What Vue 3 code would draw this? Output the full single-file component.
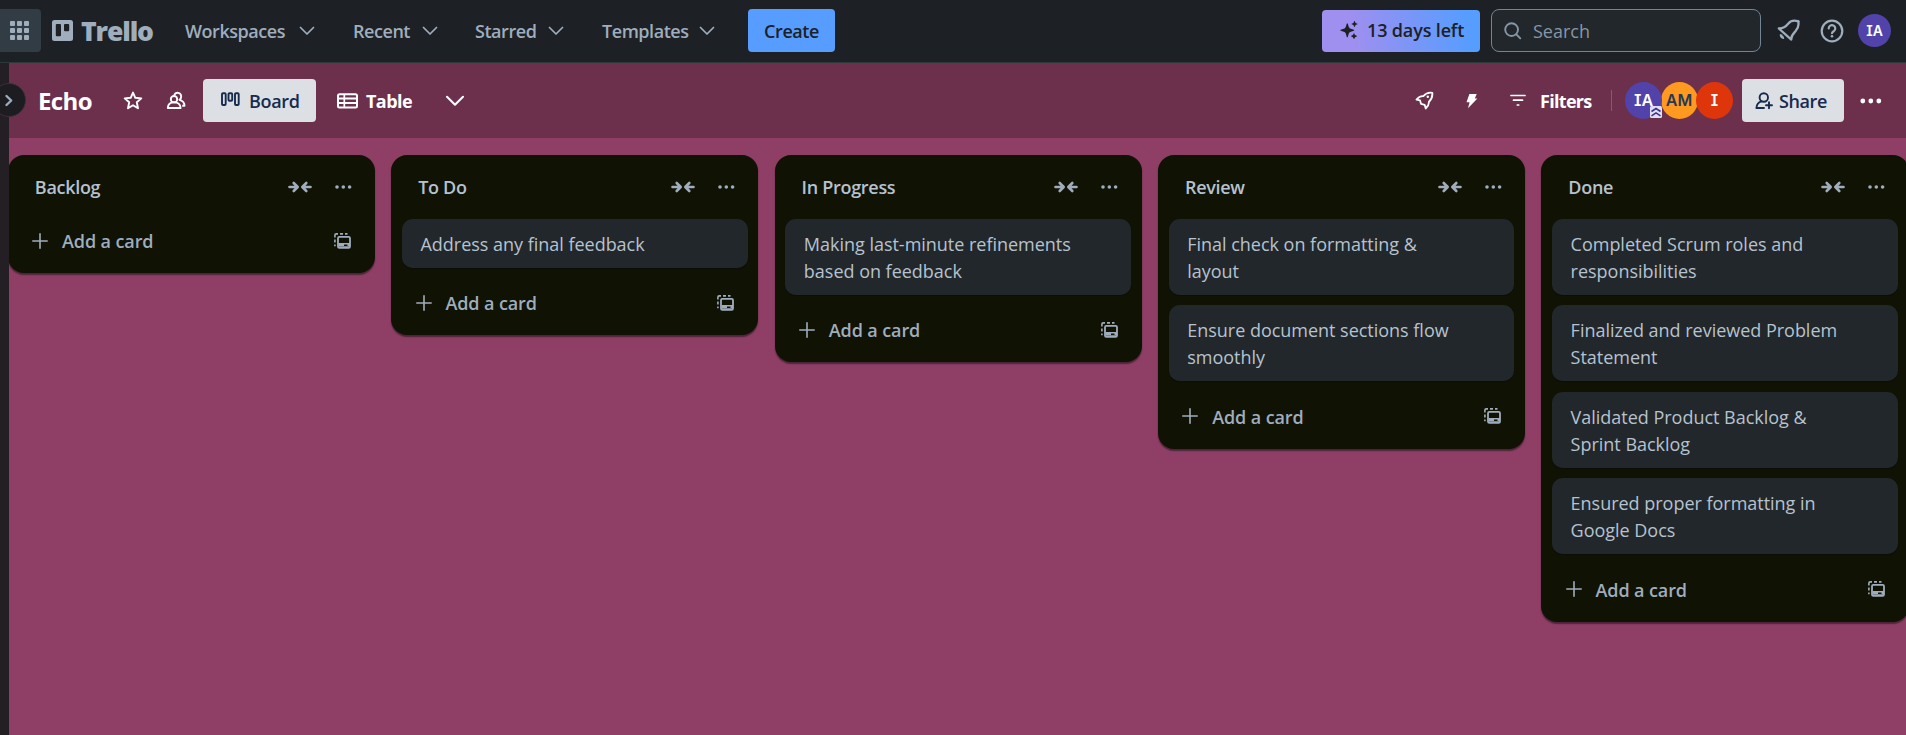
<script setup>
const navItems = [
  { label: 'Workspaces', cls: 'workspaces' },
  { label: 'Recent', cls: 'recent' },
  { label: 'Starred', cls: 'starred' },
  { label: 'Templates', cls: 'templates' },
]

const lists = [
  { title: 'Backlog', cards: [] },
  { title: 'To Do', cards: [['Address any final feedback']] },
  { title: 'In Progress', cards: [['Making last-minute refinements', 'based on feedback']] },
  {
    title: 'Review',
    cards: [
      ['Final check on formatting &', 'layout'],
      ['Ensure document sections flow', 'smoothly'],
    ],
  },
  {
    title: 'Done',
    cards: [
      ['Completed Scrum roles and', 'responsibilities'],
      ['Finalized and reviewed Problem', 'Statement'],
      ['Validated Product Backlog &', 'Sprint Backlog'],
      ['Ensured proper formatting in', 'Google Docs'],
    ],
  },
]
</script>

<template>
  <div class="app">
    <header class="topbar">
      <button class="apps" aria-label="Apps">
        <svg width="19" height="19" viewBox="0 0 19 19" fill="currentColor">
          <template v-for="r in 3" :key="r">
            <rect v-for="c in 3" :key="c" :x="(c - 1) * 7" :y="(r - 1) * 7" width="5" height="5" rx="1" />
          </template>
        </svg>
      </button>
      <a class="logo">
        <svg width="21" height="21" viewBox="0 0 21 21">
          <path fill="currentColor" fill-rule="evenodd" d="M2.5 0h16A2.5 2.5 0 0 1 21 2.5v16a2.500 2.500 0 0 1-2.500 2.500h-16A2.500 2.500 0 0 1 0 18.500v-16A2.500 2.500 0 0 1 2.500 0zM4.800 4a1 1 0 0 0-1 1v10.200a1 1 0 0 0 1 1H8a1 1 0 0 0 1-1V5a1 1 0 0 0-1-1zM13 4a1 1 0 0 0-1 1v5.300a1 1 0 0 0 1 1h3.200a1 1 0 0 0 1-1V5a1 1 0 0 0-1-1z" />
        </svg>
        <span class="wordmark">Trello</span>
      </a>
      <nav class="nav">
        <a v-for="n in navItems" :key="n.label" class="nav-item" :class="n.cls">
          <span>{{ n.label }}</span>
          <svg width="16" height="10" viewBox="0 0 16 10" fill="none" stroke="currentColor" stroke-width="1.700" stroke-linecap="round" stroke-linejoin="round">
            <path d="M1.500 1.500 8 8l6.500-6.500" />
          </svg>
        </a>
      </nav>
      <button class="create"><span>Create</span></button>
      <div class="spacer"></div>
      <button class="trial">
        <svg width="19" height="19" viewBox="0 0 19 19" fill="currentColor">
          <path d="M7.300 2.200c.8 0 .9 3.300 2.200 4.700 1.300 1.300 4.800 1.500 4.800 2.300s-3.500 1-4.800 2.300c-1.300 1.400-1.400 5-2.200 5s-.9-3.600-2.200-5C3.800 10.200.3 10 .3 9.200s3.500-1 4.800-2.300c1.300-1.400 1.400-4.700 2.200-4.700z" />
          <path d="M14.500 0c.6 0 .6 1.400 1.100 1.900.5.500 2 .5 2 1.100s-1.500.6-2 1.100c-.5.500-.5 2-1.100 2s-.6-1.500-1.100-2c-.5-.5-2-.5-2-1.100s1.500-.6 2-1.100c.5-.5.500-1.900 1.100-1.900zM14 12.200c.6 0 .6 1.400 1.100 1.900.5.500 1.800.5 1.800 1.100s-1.300.6-1.800 1.100c-.5.500-.5 1.800-1.100 1.800s-.6-1.300-1.100-1.800c-.5-.5-1.800-.5-1.800-1.100s1.300-.6 1.800-1.100c.5-.5.500-1.900 1.100-1.900z" />
        </svg>
        <span>13 days left</span>
      </button>
      <div class="search">
        <svg width="18" height="18" viewBox="0 0 18 18" fill="none" stroke="currentColor" stroke-width="1.900" stroke-linecap="round">
          <circle cx="7.600" cy="7.600" r="6.400" />
          <path d="m12.300 12.300 4 4" />
        </svg>
        <span>Search</span>
      </div>
      <svg class="bell" width="24" height="23" viewBox="0 0 24 23" fill="none" stroke="currentColor" stroke-width="2.300" stroke-linejoin="round">
        <path d="M1.800 9.500 14.300 20.600C13.800 17 15.500 15.600 18.300 12.500C21.200 9.200 22.200 6 21.200 2.300C17.200 1 13.800 1.600 11.400 4.500C8.700 7.800 6.500 9.800 1.800 9.500z" />
        <path d="M4.200 15.300c-.6 2.200 1.200 3.600 2.700 3.200" stroke-width="2.700" />
        <path d="M20.500 3.300 22 1.500" />
      </svg>
      <svg class="help" width="24" height="24" viewBox="0 0 24 24" fill="none" stroke="currentColor" stroke-width="2.200" stroke-linecap="round">
        <circle cx="12" cy="12" r="10.300" />
        <path d="M8.700 9.500a3.300 3.300 0 1 1 5.200 2.600c-1.200.8-1.900 1.200-1.900 2.100" />
        <circle cx="12" cy="17.300" r="1.300" fill="currentColor" stroke="none" />
      </svg>
      <span class="me">IA</span>
    </header>

    <div class="body">
      <aside class="rail">
        <button class="expand" aria-label="Expand sidebar">
          <svg width="10" height="13" viewBox="0 0 10 13" fill="none" stroke="currentColor" stroke-width="2.400" stroke-linecap="round" stroke-linejoin="round">
            <path d="m2.500 2 4.700 4.500L2.500 11" />
          </svg>
        </button>
      </aside>
      <main class="board">
        <div class="board-head">
          <h1 class="name">Echo</h1>
          <svg class="star" width="20" height="19" viewBox="0 0 20 19" fill="none" stroke="currentColor" stroke-width="1.900" stroke-linejoin="round">
            <path d="m10 1.600 2.300 5.200 6 .6-4.500 3.900 1.200 5.900-5-3-5 3 1.200-5.900-4.500-3.900 6-.6z" />
          </svg>
          <svg class="people" width="20" height="19" viewBox="0 0 20 19" fill="none" stroke="currentColor" stroke-width="1.900" stroke-linejoin="round">
            <circle cx="8" cy="8.200" r="3.200" />
            <path d="M1.800 17c0-3.600 2.600-5.700 6.200-5.700S14.600 13.400 14.600 17z" />
            <path d="M8.200 4C9.700.6 15 1.200 15.200 5.400c.1 1.500-.7 2.700-1.700 3.400 3.400.9 5 2.700 5 5.900h-2.300" />
          </svg>
          <button class="view active">
            <svg width="19" height="15" viewBox="0 0 19 15" fill="none" stroke="currentColor" stroke-width="1.900">
              <rect x="1" y="1.200" width="3.700" height="11.800" rx="1" />
              <rect x="7.500" y="1.200" width="3.700" height="7.600" rx="1" />
              <rect x="14" y="1.200" width="3.700" height="11.800" rx="1" />
            </svg>
            <span>Board</span>
          </button>
          <button class="view table">
            <svg width="21" height="16" viewBox="0 0 21 16" fill="none" stroke="currentColor" stroke-width="2">
              <rect x="1" y="1.300" width="19" height="13.200" rx="1.500" />
              <path d="M1 5.600h19M1 10.100h19" />
              <path d="M7.300 1v13.500" stroke-width="1.700" />
            </svg>
            <span>Table</span>
          </button>
          <svg class="more-views" width="20" height="12" viewBox="0 0 20 12" fill="none" stroke="currentColor" stroke-width="2.100" stroke-linecap="round" stroke-linejoin="round">
            <path d="m2 1.800 8 7.900 8-7.900" />
          </svg>
          <div class="spacer"></div>
          <svg class="rocket" width="19" height="19" viewBox="0 0 19 19" fill="none" stroke="currentColor" stroke-width="1.800" stroke-linejoin="round">
            <path d="M1.500 8.600C3.300 6.200 5.300 5 8.300 5.200C11 2 14 1.200 17.300 1.800C17.700 5 16.900 7.900 13.800 11C14.200 13.700 12.800 15.700 10.700 17.500L9.700 13.800 6 12.800 5 9.300z" />
            <circle cx="12.800" cy="5.800" r="1.200" fill="currentColor" stroke="none" />
          </svg>
          <svg class="bolt" width="12" height="16" viewBox="0 0 12 16" fill="currentColor">
            <path d="M3.400 1h7.300L8.800 5.500h2.600L2 15.200 3.600 9.200H.5z" />
          </svg>
          <button class="filters">
            <svg width="16" height="13" viewBox="0 0 16 13" stroke="currentColor" stroke-width="1.700" stroke-linecap="round">
              <path d="M1 1.500h14M3.500 6.200h9M7.300 11h1.400" />
            </svg>
            <span>Filters</span>
          </button>
          <i class="divider"></i>
          <div class="members">
            <span class="avatar ia">IA
              <svg class="badge" width="12" height="12" viewBox="0 0 12 12">
                <rect width="12" height="12" rx="1.500" fill="#dfe1f0" />
                <path d="m1.500 5.500 4.500-3 4.500 3M1.500 9.900l4.500-3 4.500 3" fill="none" stroke="#403294" stroke-width="1.600" />
              </svg>
            </span>
            <span class="avatar am">AM</span>
            <span class="avatar i">I</span>
          </div>
          <button class="share">
            <svg width="19" height="18" viewBox="0 0 19 18" fill="none" stroke="currentColor" stroke-width="1.900" stroke-linecap="round" stroke-linejoin="round">
              <circle cx="8.800" cy="5.500" r="4.200" />
              <path d="M6.500 9.400C3.300 10.400 1.600 12.500 1.400 16H9" />
              <path d="M14 10.300v6M11 13.300h6" />
            </svg>
            <span>Share</span>
          </button>
          <svg class="menu" width="22" height="6" viewBox="0 0 22 6" fill="currentColor">
            <circle cx="2.800" cy="3" r="2.400" /><circle cx="10.800" cy="3" r="2.400" /><circle cx="18.800" cy="3" r="2.400" />
          </svg>
        </div>

        <div class="lists">
          <section v-for="l in lists" :key="l.title" class="list">
            <div class="list-head">
              <h2>{{ l.title }}</h2>
              <svg width="24" height="12" viewBox="0 0 24 12" fill="none" stroke="currentColor" stroke-width="2.600" stroke-linecap="round" stroke-linejoin="round">
                <path d="M1.500 6h8M5.700 2l4 4-4 4M22.500 6h-8M18.300 2l-4 4 4 4" />
              </svg>
              <svg class="dots" width="17" height="4" viewBox="0 0 17 4" fill="currentColor">
                <circle cx="2" cy="2" r="1.800" /><circle cx="8.300" cy="2" r="1.800" /><circle cx="14.600" cy="2" r="1.800" />
              </svg>
            </div>
            <div v-if="l.cards.length" class="cards">
              <article v-for="(c, i) in l.cards" :key="i" class="card">
                <div v-for="line in c" :key="line">{{ line }}</div>
              </article>
            </div>
            <div class="list-foot">
              <svg class="plus" width="16" height="16" viewBox="0 0 16 16" stroke="currentColor" stroke-width="1.600" stroke-linecap="round">
                <path d="M8 .8v14.400M.8 8h14.400" />
              </svg>
              <span>Add a card</span>
              <svg class="template" width="17" height="16" viewBox="0 0 17 16" fill="none" stroke="currentColor">
                <path d="M.9 13.300V11.500M.9 9.500V6.500M.9 4.500V2.300Q.9 .9 2.300.9H4M6 .9h3M11 .9h2.500" stroke-width="1.600" />
                <rect x="4" y="3.900" width="12" height="11" rx="1.300" stroke-width="1.800" />
                <path d="M4.500 12.300h5.500M13.500 12.300h2.500M4.500 10.800h11.500M4.500 14h11.500" stroke-width="1.500" />
              </svg>
            </div>
          </section>
        </div>
      </main>
    </div>
  </div>
</template>

<style>
html, body { margin: 0; overflow: hidden; background: #8f3f65; }
</style>

<style scoped>
* { box-sizing: border-box; }
.app {
  width: 1906px; height: 735px; overflow: hidden;
  display: flex; flex-direction: column;
  font-family: "Open Sans", "Noto Sans", sans-serif;
  font-size: 18px; line-height: 27px; color: #b6c2cf;
}
button { border: 0; padding: 0; margin: 0; background: none; font: inherit; color: inherit; display: flex; align-items: center; }
h1, h2 { margin: 0; font-size: inherit; }
svg { flex: none; display: block; }
span { white-space: nowrap; }
.spacer { flex: 1; }

.topbar {
  flex: none; height: 63px; padding-bottom: 1px; border-bottom: 1px solid #2c3a3b;
  background: #1d2125; color: #9fadbc; display: flex; align-items: center;
}
.apps { width: 41px; height: 43px; background: #323c44; border-radius: 0 4px 4px 0; padding-left: 10px; }
.logo { display: flex; align-items: center; width: 144px; padding-left: 11px; }
.wordmark { margin-left: 8px; font-size: 26.500px; font-weight: 800; letter-spacing: -1.100px; position: relative; top: 1px; }
.nav { display: flex; font-weight: 600; }
.nav-item { display: flex; align-items: center; justify-content: space-between; letter-spacing: -0.450px; }
.nav-item span { position: relative; top: 1px; }
.workspaces { width: 130px; margin-right: 38px; }
.recent { width: 85px; margin-right: 37px; }
.starred { width: 89px; margin-right: 38px; }
.templates { width: 113px; margin-right: 33px; }
.create { width: 87px; height: 43px; background: #579dff; color: #1d2125; border-radius: 4px; justify-content: center; font-weight: 600; letter-spacing: -0.450px; }
.create span { position: relative; top: 1px; }
.trial { width: 158px; height: 42px; margin-right: 11px; padding-left: 18px; border-radius: 4px; color: #1d2125; font-weight: 600; letter-spacing: -0.150px; background: linear-gradient(82deg, #9f8fef 20%, #579dff 90%); }
.trial span { margin-left: 8px; }
.search { width: 270px; height: 43px; border: 1px solid #738496; border-radius: 8px; background: #22272b; display: flex; align-items: center; padding-left: 12px; color: #8696a7; }
.search span { margin-left: 11px; position: relative; top: 1px; }
.bell { margin-left: 16px; }
.help { margin-left: 19px; }
.me { width: 33px; height: 33px; margin: 0 15px 0 14px; border-radius: 50%; background: #5243aa; color: #fff; font: 600 14px/33px Inter, sans-serif; font-feature-settings: "cv08" 1; text-align: center; }

.body { flex: 1; display: flex; min-height: 0; }
.rail { flex: none; width: 9px; background: #231f24; position: relative; }
.expand { position: absolute; left: -8px; top: 20px; width: 34px; height: 34px; border-radius: 50%; background: #1d1c21; border: 1px solid #3a3036; color: #9fadbc; padding-left: 11px; z-index: 2; }
.board { flex: 1; min-width: 0; background: #8f3f65; overflow: hidden; }
.board-head { height: 75px; background: #6c304c; color: #fff; display: flex; align-items: center; }
.name { width: 84px; padding-left: 29px; font-size: 24px; font-weight: 700; letter-spacing: -0.600px; position: relative; top: 0; }
.star { margin-left: 30px; }
.people { margin-left: 23px; }
.view { height: 43px; border-radius: 4px; letter-spacing: -0.550px; font-weight: 700; }
.view span, .filters span, .share span { position: relative; top: 1px; }
.active { margin-left: 17px; width: 113px; padding-left: 18px; background: #dcdfe4; color: #172b4d; font-weight: 600; letter-spacing: -0.350px; }
.active svg { position: relative; top: -1px; }
.active span { margin-left: 9px; }
.table { padding-left: 21px; width: 129px; }
.table span { margin-left: 8px; }
.rocket { margin-right: 32px; }
.bolt { margin-right: 32px; }
.filters { width: 101px; font-weight: 700; letter-spacing: -0.700px; }
.filters span { margin-left: 14px; }
.divider { width: 1px; height: 21px; background: #8b566f; margin-right: 13px; }
.members { display: flex; margin-right: 9px; }
.avatar { position: relative; width: 37px; height: 37px; margin-right: -1.500px; border-radius: 50%; line-height: 37px; text-align: center; font-family: Inter, sans-serif; font-feature-settings: "cv08" 1; font-size: 16px; font-weight: 600; color: #fff; }
.ia { background: #5243aa; z-index: 1; }
.am { background: #ff991f; color: #253858; }
.i { background: #de350b; margin-right: 0; z-index: 0; }
.badge { position: absolute; right: 0; bottom: 1px; }
.share { width: 102px; height: 43px; padding-left: 13px; border-radius: 4px; background: #dcdfe4; color: #172b4d; font-weight: 600; letter-spacing: -0.400px; }
.share span { margin-left: 5px; }
.menu { margin: 0 24px 0 16px; }

.lists { display: flex; align-items: flex-start; gap: 16.200px; padding-top: 17px; margin-left: -1.200px; }
.list { flex: none; width: 367.200px; border-radius: 16.200px; background: #101204; box-shadow: 0 1.350px 1.350px #09090c80; padding-bottom: 10.800px; }
.list-head { height: 64px; padding: 0 23.300px 0 27px; display: flex; align-items: center; color: #9fadbc; }
.list-head h2 { flex: 1; font-weight: 600; color: #b6c2cf; letter-spacing: -0.300px; }
.dots { margin-left: 23px; }
.cards { padding: 0 10.800px; display: flex; flex-direction: column; gap: 10.900px; }
.card { background: #22272b; border-radius: 10.800px; padding: 12px 16px 9.600px 18.500px; box-shadow: 0 1px 1px #09090c80; white-space: nowrap; letter-spacing: -0.020px; }
.list-foot { height: 57.100px; padding: 13.500px 17px 0 24.500px; display: flex; align-items: center; color: #9fadbc; font-weight: 600; letter-spacing: -0.100px; }
.list-head + .list-foot { margin-top: -13.700px; }
.list-foot span { flex: 1; margin-left: 13.700px; position: relative; top: 1px; }
.template { margin-right: 7px; }
</style>
